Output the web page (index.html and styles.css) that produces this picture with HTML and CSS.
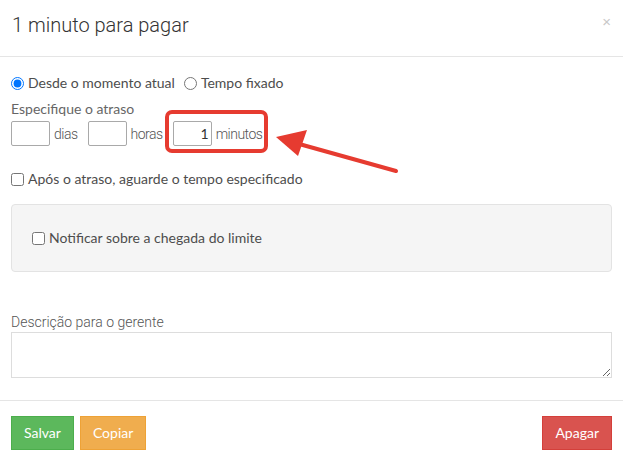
FILE: index.html
```html
<!doctype html>
<html>
<head>
    <link rel="stylesheet" href="styles.css">
</head>
<body>
<div id="modal">
    <div class="modal-header">
        <h4 class="modal-title">1 minuto para pagar</h4>
        <span class="close">&times;</span>
    </div>

    <div class="modal-body">
        <div class="radio-row">
            <label><input type="radio" name="mode" checked> Desde o momento atual</label>
            <label><input type="radio" name="mode"> Tempo fixado</label>
        </div>

        <div class="delay-title">Especifique o atraso</div>
        <div class="delay-row">
            <input class="num" type="text" value="">
            <span class="unit">dias</span>
            <input class="num" type="text" value="">
            <span class="unit">horas</span>
            <span class="minutes">
                <input class="num" type="text" value="1">
                <span class="unit">minutos</span>
            </span>
        </div>

        <label class="check-row"><input type="checkbox"> Após o atraso, aguarde o tempo especificado</label>

        <div class="well">
            <label class="check-row"><input type="checkbox"> Notificar sobre a chegada do limite</label>
        </div>

        <label class="desc-label" for="desc">Descrição para o gerente</label>
        <textarea id="desc"></textarea>
    </div>

    <div class="modal-footer">
        <div class="left-buttons">
            <button class="btn btn-success">Salvar</button>
            <button class="btn btn-warning">Copiar</button>
        </div>
        <button class="btn btn-danger">Apagar</button>
    </div>
</div>

<!-- annotation drawn over the screenshot -->
<svg class="annotation" width="623" height="462" viewBox="0 0 623 462">
    <rect x="167" y="112" width="99" height="39" rx="5" fill="none" stroke="#e63b30" stroke-width="4"/>
    <line x1="396" y1="171" x2="292" y2="142" stroke="#e63b30" stroke-width="4" stroke-linecap="round"/>
    <polygon points="276,137 307,130 298,156" fill="#e63b30"/>
</svg>
</body>
</html>
```

FILE: styles.css
```css
html, body {
    margin: 0;
    background: #ffffff;
}
body {
    font-family: Lato, "Open Sans", sans-serif;
    font-size: 14px;
    color: #4d4d4d;
}
#modal {
    width: 623px;
}
.modal-header {
    display: flex;
    justify-content: space-between;
    align-items: flex-start;
    padding: 12px 11px 18px 12px;
    border-bottom: 1px solid #e5e5e5;
}
.modal-title {
    margin: 0;
    font-family: Roboto, "Liberation Sans", sans-serif;
    font-weight: 300;
    font-size: 20px;
    line-height: 26px;
    color: #333333;
}
.close {
    font-family: "Liberation Sans", sans-serif;
    font-size: 15px;
    line-height: 15px;
    color: #c8c8c8;
    margin-top: 2px;
    margin-right: 1px;
}
.modal-body {
    padding: 16px 11px 22px 11px;
    display: flex;
    flex-direction: column;
}
.radio-row {
    display: flex;
    gap: 9px;
    line-height: 20px;
}
.radio-row label, .check-row {
    display: flex;
    align-items: center;
    line-height: 20px;
}
input[type=radio], input[type=checkbox] {
    margin: 0 4px 0 0;
    width: 13px;
    height: 13px;
}
.delay-title {
    margin-top: 6px;
    line-height: 20px;
    color: #666666;
}
.delay-row {
    display: flex;
    align-items: center;
    height: 25px;
    margin-top: 2px;
}
.num {
    box-sizing: border-box;
    width: 39px;
    height: 25px;
    margin: 0 4px 0 0;
    padding: 0 2px;
    border: 1px solid #a9a9a9;
    border-radius: 2px;
    text-align: right;
    font-family: Lato, sans-serif;
    font-size: 14px;
    color: #333333;
}
.unit {
    font-family: Roboto, "Liberation Sans", sans-serif;
    font-weight: 300;
    letter-spacing: -0.5px;
    color: #555555;
    margin-right: 10px;
}
.minutes {
    display: flex;
    align-items: center;
}
.minutes .unit {
    margin-right: 0;
}
.delay-row + .check-row {
    margin-top: 23px;
}
.well {
    margin-top: 15px;
    padding: 23px 20px 23px 20px;
    background: #f5f5f5;
    border: 1px solid #e3e3e3;
    border-radius: 4px;
}
.desc-label {
    margin-top: 40px;
    line-height: 20px;
    font-family: Roboto, "Liberation Sans", sans-serif;
    font-weight: 300;
    color: #555555;
}
textarea {
    box-sizing: border-box;
    width: 601px;
    height: 46px;
    margin: 0;
    border: 1px solid #dddddd;
    border-radius: 0;
    font-family: Lato, sans-serif;
    font-size: 14px;
}
.modal-footer {
    display: flex;
    justify-content: space-between;
    padding: 15px 11px;
    border-top: 1px solid #e5e5e5;
}
.left-buttons {
    display: flex;
    gap: 6px;
}
.btn {
    height: 34px;
    padding: 6px 12px;
    border: 1px solid transparent;
    border-radius: 0;
    font-family: Lato, sans-serif;
    font-size: 14px;
    line-height: 20px;
    color: #ffffff;
}
.btn-success {
    background: #5cb85c;
    border-color: #4cae4c;
}
.btn-warning {
    background: #f0ad4e;
    border-color: #eea236;
}
.btn-danger {
    background: #d9534f;
    border-color: #d43f3a;
}
.annotation {
    position: absolute;
    top: 0;
    left: 0;
    pointer-events: none;
}
```
